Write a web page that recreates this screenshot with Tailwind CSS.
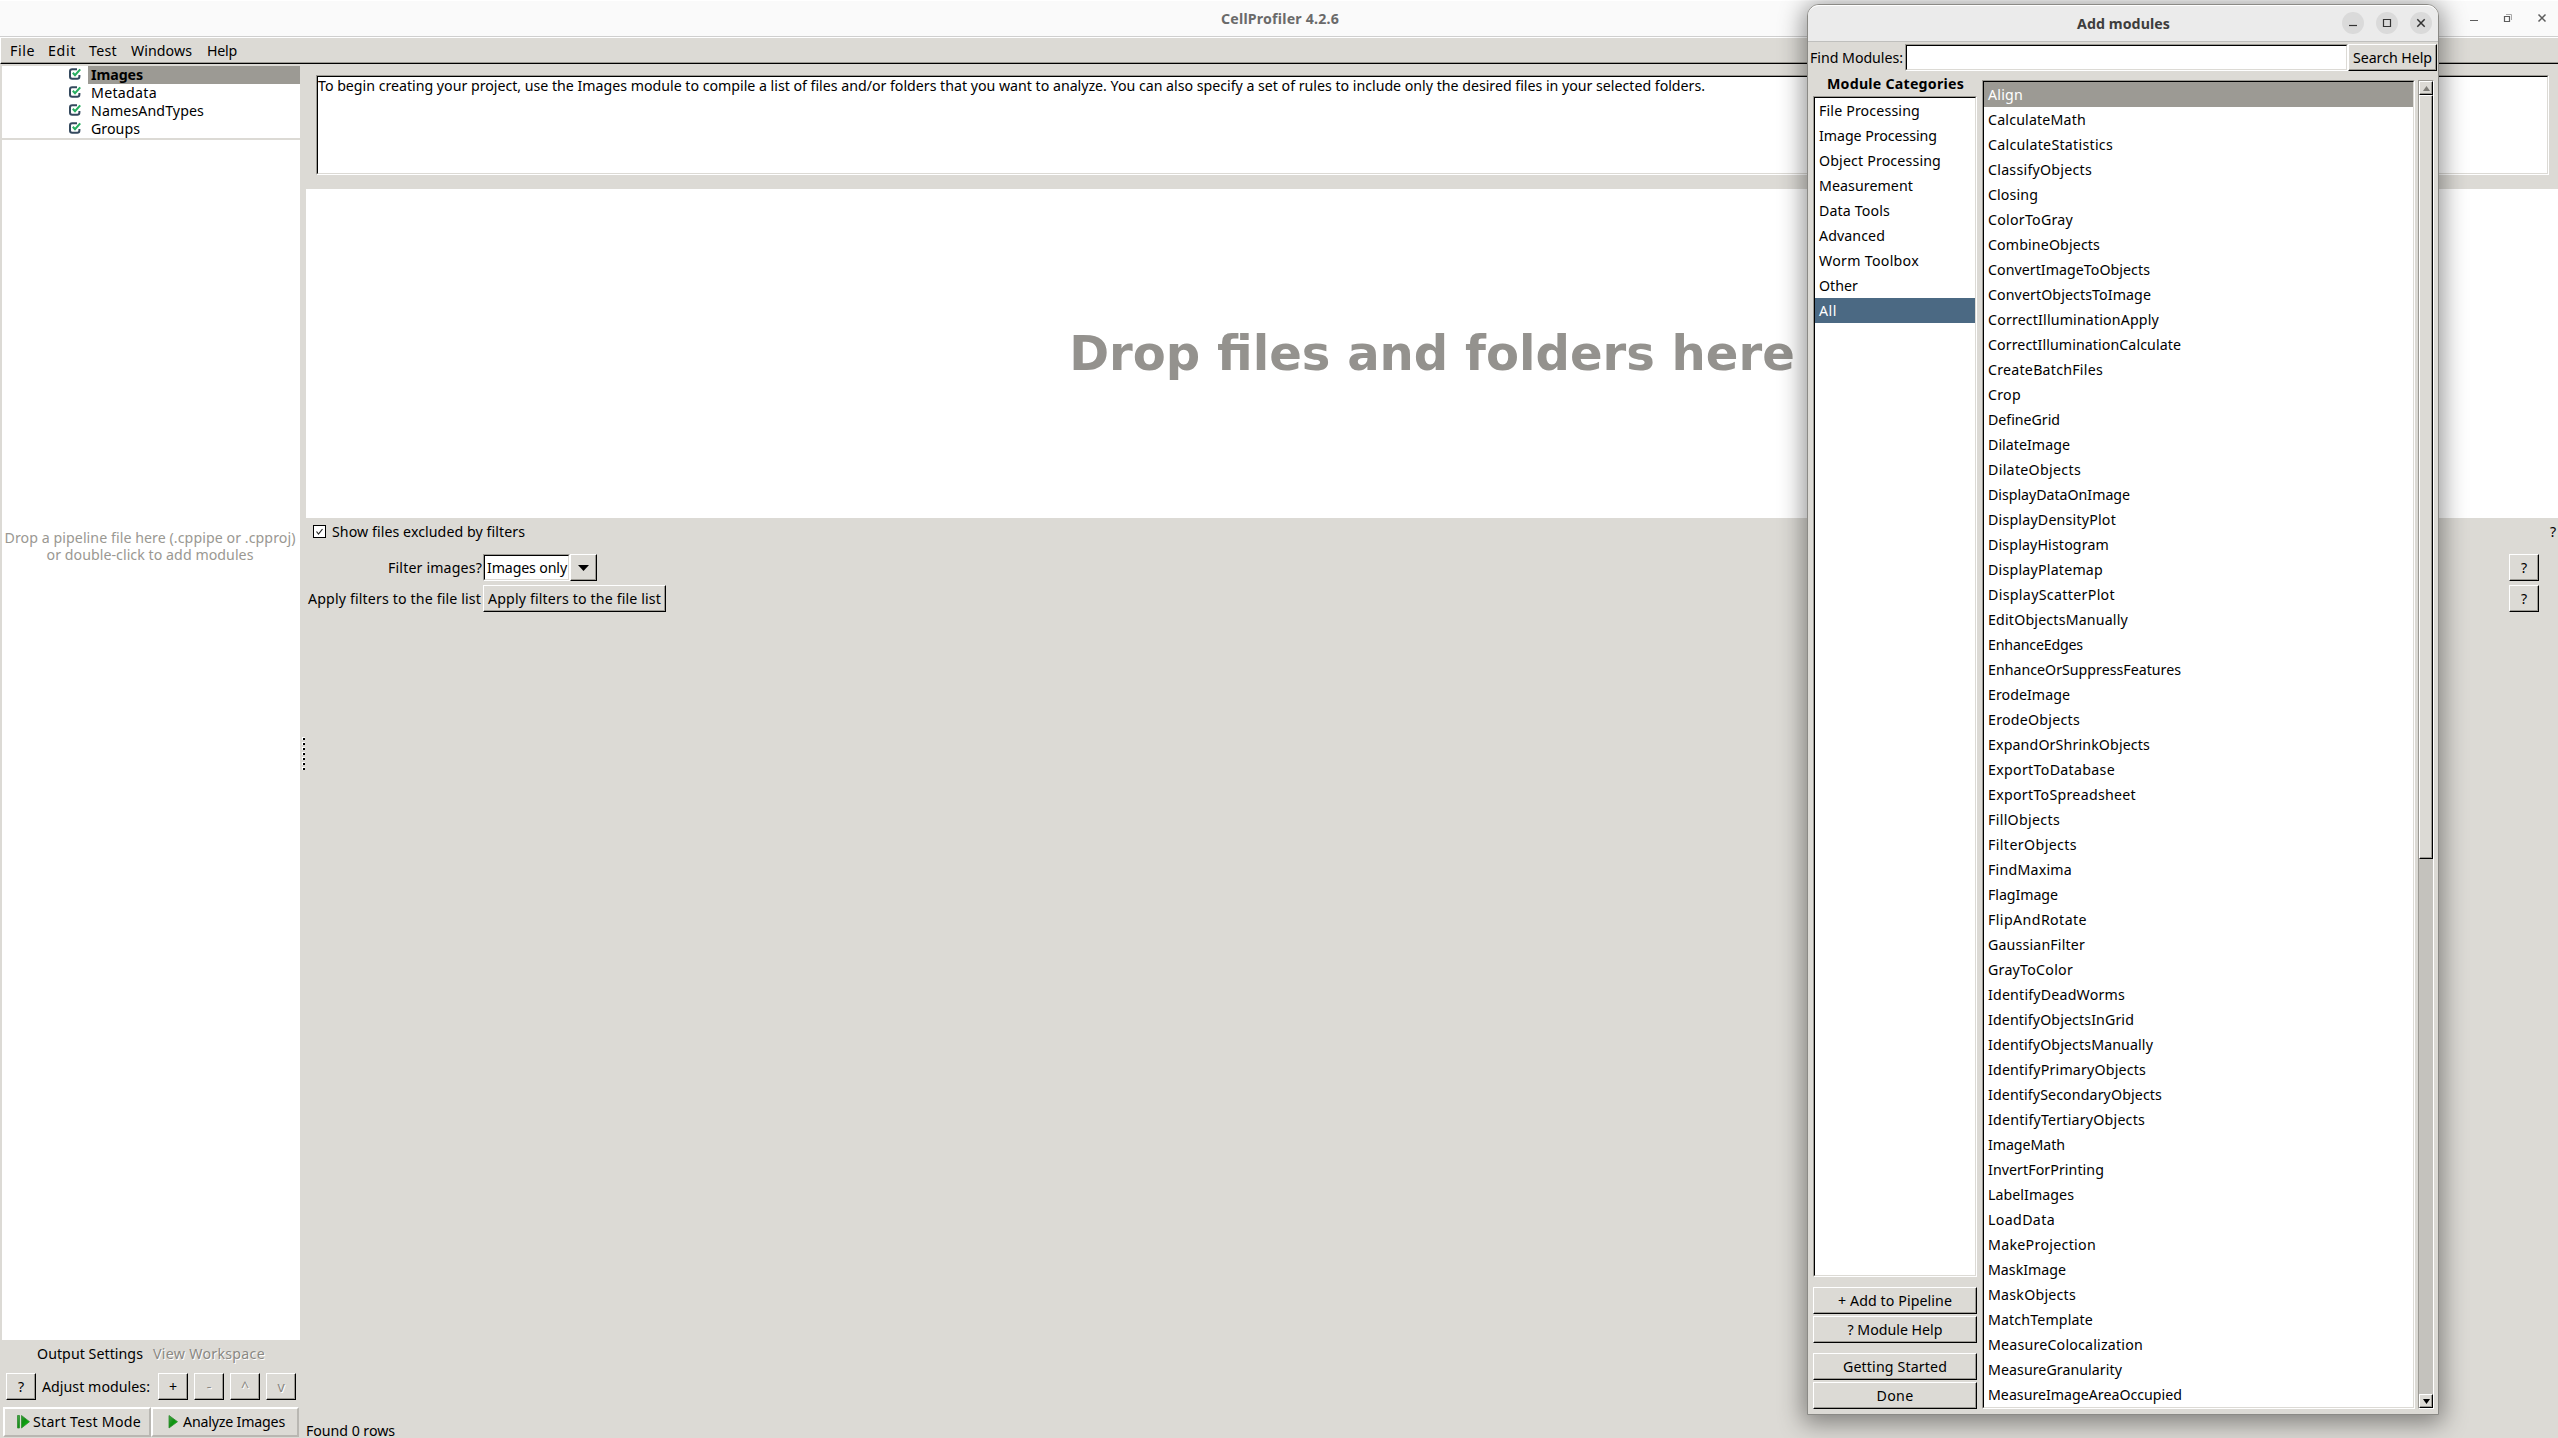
<!DOCTYPE html>
<html lang="en">
<head>
<meta charset="utf-8">
<title>CellProfiler 4.2.6</title>
<script src="https://cdn.jsdelivr.net/npm/@tailwindcss/browser@4"></script>
</head>
<body class="overflow-hidden">
<svg class="absolute size-0">
  <symbol id="check" viewBox="0 0 12 12">
    <path d="M8 1.2H3.2Q1 1.2 1 3.4V8.6Q1 10.8 3.2 10.8H8.2Q10.4 10.8 10.4 8.6V7" fill="none" stroke="#34495e" stroke-width="2"/>
    <path d="M3.8 4.8L6 7.2L11.2 1.4" fill="none" stroke="#27ae60" stroke-width="2.1"/>
  </symbol>
  <linearGradient id="green" x1="0" y1="0" x2="1" y2="1"><stop offset="0" stop-color="#4aa84a"/><stop offset=".5" stop-color="#0f8f12"/><stop offset="1" stop-color="#08d808"/></linearGradient>
</svg>
<div class="relative flex h-[1438px] w-[2558px] flex-col overflow-hidden bg-[#dcdad5] font-['Noto_Sans',sans-serif] text-[14.2px] leading-[18px] whitespace-nowrap text-black" id="screen">

  <!-- Main window title bar -->
  <header class="flex h-[37px] shrink-0 border-t border-b border-t-white border-b-[#cfcfcf] bg-[#fafafa]">
    <div class="w-[1221px]"></div>
    <div class="w-[1249px] pt-[9px] font-bold text-[#6a6a6a]"><span data-w="118">CellProfiler 4.2.6</span></div>
    <svg class="mt-[12px] h-[12px] w-[80px]" viewBox="0 0 80 12" fill="none" stroke="#5c5c5c">
      <path d="M0 7.5H8" stroke-width="1"/>
      <path d="M34.5 3.5H39.5V8.5H34.5Z" stroke-width="1.2"/><path d="M36 1.5H41.5V7" stroke="#a8a8a8"/>
      <path d="M68.5 1.5L75.5 8.5M75.5 1.5L68.5 8.5" stroke-width="1.5"/>
    </svg>
  </header>

  <!-- Menu bar -->
  <nav class="flex h-[27px] shrink-0 border-t border-b border-l border-t-white border-b-black border-l-white shadow-[inset_0_-1px_0_#9c9a94]">
    <div class="flex pt-[4px] pl-[9px]">
      <div class="w-[38px]"><span data-w="25">File</span></div>
      <div class="w-[41px]"><span data-w="28">Edit</span></div>
      <div class="w-[42px]"><span data-w="28">Test</span></div>
      <div class="w-[76px]"><span data-w="61">Windows</span></div>
      <div><span data-w="30">Help</span></div>
    </div>
  </nav>

  <main class="flex h-[1374px] shrink-0">
    <!-- Pipeline column -->
    <aside class="flex w-[300px] shrink-0 flex-col pt-[2px] pl-[2px]">
      <div class="flex h-[72px] flex-col bg-white" id="tree"></div>
      <div class="mt-[2px] flex h-[1200px] flex-col items-center bg-white pt-[389px] pr-[2px] leading-[17px] text-[#9a9892]">
        <span data-w="291">Drop a pipeline file here (.cppipe or .cpproj)</span>
        <span data-w="207">or double-click to add modules</span>
      </div>
      <div class="flex h-[33px] gap-[10px] pt-[5px] pl-[35px]">
        <span data-w="106">Output Settings</span>
        <span data-w="112" class="text-[#8a8883] [text-shadow:1px_1px_0_#fff]">View Workspace</span>
      </div>
      <div class="flex h-[27px] pl-[4px] text-center leading-[27px]">
        <div class="w-[30px] border border-t-white border-r-black border-b-black border-l-white leading-[25px] shadow-[inset_-1px_-1px_0_#9c9a94]">?</div>
        <div class="w-[122px] pl-[6px] text-left"><span data-w="108">Adjust modules:</span></div>
        <div class="flex gap-[6px] text-[#8a8883]">
          <div class="w-[30px] border border-t-white border-r-black border-b-black border-l-white leading-[25px] text-black shadow-[inset_-1px_-1px_0_#9c9a94]">+</div>
          <div class="w-[30px] border border-t-white border-r-black border-b-black border-l-white leading-[25px] shadow-[inset_-1px_-1px_0_#9c9a94] [text-shadow:1px_1px_0_#fff]">-</div>
          <div class="w-[30px] border border-t-white border-r-black border-b-black border-l-white leading-[25px] shadow-[inset_-1px_-1px_0_#9c9a94] [text-shadow:1px_1px_0_#fff]">^</div>
          <div class="w-[30px] border border-t-white border-r-black border-b-black border-l-white leading-[25px] shadow-[inset_-1px_-1px_0_#9c9a94] [text-shadow:1px_1px_0_#fff]">v</div>
        </div>
      </div>
      <div class="mt-[7px] flex h-[30px] pl-px">
        <div class="flex w-[148px] border-2 border-t-white border-r-[#b9b7b2] border-b-[#b9b7b2] border-l-white pl-[12px]">
          <svg class="mt-[6px] h-[14px] w-[16px]" viewBox="0 0 16 14"><path d="M.5 .5H2.5V13H.5Z M4.5 .5L12.5 6.7L4.5 13Z" fill="url(#green)" stroke="#2f8a2f" stroke-width=".8"/></svg>
          <span data-w="108" class="pt-[4px]">Start Test Mode</span>
        </div>
        <div class="flex w-[148px] border-2 border-t-white border-r-[#b9b7b2] border-b-[#b9b7b2] border-l-white pl-[15px]">
          <svg class="mt-[6px] h-[14px] w-[15px]" viewBox="0 0 15 14"><path d="M1 .5L9.5 6.7L1 13Z" fill="url(#green)" stroke="#2f8a2f" stroke-width=".8"/></svg>
          <span data-w="102" class="pt-[4px]">Analyze Images</span>
        </div>
      </div>
    </aside>

    <!-- Splitter handle -->
    <div class="flex w-[6px] shrink-0 flex-col gap-[2px] pt-[673px] pl-[2px]" id="sash"></div>

    <!-- Module settings -->
    <section class="flex w-[2252px] shrink-0 flex-col">
      <div class="mt-[11px] ml-[10px] h-[100px] w-[2233px] shrink-0 border border-t-[#9c9a94] border-r-white border-b-white border-l-[#9c9a94] bg-white">
        <div class="h-[98px] border border-t-black border-r-[#dcdad5] border-b-[#dcdad5] border-l-black"><span data-w="1387">To begin creating your project, use the Images module to compile a list of files and/or folders that you want to analyze. You can also specify a set of rules to include only the desired files in your selected folders.</span></div>
      </div>
      <div class="mt-[14px] flex h-[329px] shrink-0 items-center justify-center bg-white pb-[2px] font-['DejaVu_Sans',sans-serif] text-[48.1px] font-bold text-[#94928e]"><span>Drop files and folders here</span></div>
      <div class="flex h-[36px] shrink-0 pt-[5px] pl-[7px]">
        <div class="mt-[2px] size-[13px] border border-black bg-white"><svg viewBox="0 0 11 11"><path d="M2.5 5.5L4.5 8L8.5 3" fill="none" stroke="#222" stroke-width="1.2"/></svg></div>
        <div class="w-[2224px] pl-[6px]"><span data-w="193">Show files excluded by filters</span></div>
        <span>?</span>
      </div>
      <div class="flex h-[27px] shrink-0 leading-[27px]">
        <div class="w-[177px] pl-[82px]"><span data-w="94">Filter images?</span></div>
        <div class="w-[87px] border border-t-[#9c9a94] border-r-white border-b-white border-l-[#9c9a94] bg-white">
          <div class="h-[25px] border border-t-black border-r-[#dcdad5] border-b-[#dcdad5] border-l-black pl-[2px] leading-[23px]"><span data-w="80">Images only</span></div>
        </div>
        <div class="flex w-[27px] items-center justify-center border border-t-white border-r-black border-b-black border-l-white shadow-[inset_-1px_-1px_0_#9c9a94]"><svg class="h-[6px] w-[11px]" viewBox="0 0 11 6"><path d="M0 0H11L5.5 6Z"/></svg></div>
        <div class="ml-[1912px] w-[30px] border border-t-white border-r-black border-b-black border-l-white text-center leading-[25px] shadow-[inset_-1px_-1px_0_#9c9a94]">?</div>
      </div>
      <div class="mt-[4px] flex h-[27px] shrink-0 leading-[27px]">
        <div class="w-[177px] pl-[2px]"><span data-w="173">Apply filters to the file list</span></div>
        <div class="w-[183px] border border-t-white border-r-black border-b-black border-l-white pl-[4px] leading-[25px] shadow-[inset_-1px_-1px_0_#9c9a94]"><span data-w="173">Apply filters to the file list</span></div>
        <div class="ml-[1843px] w-[30px] border border-t-white border-r-black border-b-black border-l-white text-center leading-[25px] shadow-[inset_-1px_-1px_0_#9c9a94]">?</div>
      </div>
      <div class="mt-[810px] h-[16px] shrink-0"><span data-w="89">Found 0 rows</span></div>
    </section>
  </main>

  <!-- Add modules dialog -->
  <div class="absolute top-[4px] left-[1807px] flex h-[1411px] w-[632px] flex-col rounded-t-[12px] border border-[#8b8a86] bg-[#dcdad5] shadow-[0_4px_24px_4px_rgba(0,0,0,0.42)]">
    <div class="flex h-[37px] shrink-0 rounded-t-[11px] border-t border-b border-t-white border-b-[#bfbfbd] bg-[#ebebeb]">
      <div class="w-[534px] pt-[9px] pl-[269px] font-bold text-[#3d3d3d]"><span data-w="93">Add modules</span></div>
      <svg class="mt-[6px] h-[22px] w-[92px]" viewBox="0 0 92 22" fill="none" stroke="#333">
        <g fill="#dadada" stroke="none"><circle cx="11" cy="11" r="11"/><circle cx="45" cy="11" r="11"/><circle cx="79" cy="11" r="11"/></g>
        <path d="M7 13.5H15" stroke-width="1.2"/><path d="M41.5 7.5H48.5V14.5H41.5Z" stroke-width="1.2"/><path d="M75.3 7.3L82.7 14.7M82.7 7.3L75.3 14.7" stroke-width="1.5"/>
      </svg>
    </div>
    <div class="mt-[2px] flex h-[27px] shrink-0 leading-[27px]">
      <div class="w-[97px] pl-[2px]"><span data-w="93">Find Modules:</span></div>
      <div class="w-[443px] border border-t-[#9c9a94] border-r-white border-b-white border-l-[#9c9a94] bg-white"><div class="h-[25px] border border-t-black border-r-[#dcdad5] border-b-[#dcdad5] border-l-black"></div></div>
      <div class="w-[89px] border border-t-white border-r-black border-b-black border-l-white pl-[4px] leading-[25px] shadow-[inset_-1px_-1px_0_#9c9a94]"><span data-w="79">Search Help</span></div>
    </div>
    <div class="flex pl-[4px]">
      <div class="flex w-[170px] flex-col pl-px">
        <div class="h-[25px] pt-[4px] pl-[14px] font-bold"><span data-w="137">Module Categories</span></div>
        <div class="h-[1181px] w-[164px] border border-t-[#9c9a94] border-r-white border-b-white border-l-[#9c9a94] bg-white">
          <div class="h-[1179px] border border-t-black border-r-[#dcdad5] border-b-[#dcdad5] border-l-black leading-[25px]" id="categories"></div>
        </div>
        <div class="mt-[10px] flex w-[164px] flex-col text-center leading-[25px]">
          <div class="h-[27px] border border-t-white border-r-black border-b-black border-l-white shadow-[inset_-1px_-1px_0_#9c9a94]"><span data-w="114">+ Add to Pipeline</span></div>
          <div class="mt-[2px] h-[27px] border border-t-white border-r-black border-b-black border-l-white shadow-[inset_-1px_-1px_0_#9c9a94]"><span data-w="95">? Module Help</span></div>
          <div class="mt-[10px] h-[27px] border border-t-white border-r-black border-b-black border-l-white shadow-[inset_-1px_-1px_0_#9c9a94]"><span data-w="104">Getting Started</span></div>
          <div class="mt-[2px] h-[27px] border border-t-white border-r-black border-b-black border-l-white shadow-[inset_-1px_-1px_0_#9c9a94]"><span data-w="37">Done</span></div>
        </div>
      </div>
      <div class="mt-[9px] h-[1329px] w-[433px] border border-t-[#9c9a94] border-r-white border-b-white border-l-[#9c9a94] bg-white">
        <div class="h-[1327px] border border-t-black border-r-[#dcdad5] border-b-[#dcdad5] border-l-black leading-[25px]" id="modules"></div>
      </div>
      <div class="mt-[9px] ml-[3px] flex h-[1329px] w-[16px] flex-col border border-t-[#9c9a94] border-r-white border-b-white border-l-[#9c9a94] bg-[#c4c2bd]">
        <div class="flex h-[14px] shrink-0 items-center justify-center border border-t-white border-r-black border-b-black border-l-white bg-[#dcdad5] shadow-[inset_-1px_-1px_0_#9c9a94]"><svg class="h-[5px] w-[7px]" viewBox="0 0 7 5"><path d="M0 5H7L3.5 0Z" fill="#7f7d78"/></svg></div>
        <div class="h-[764px] shrink-0 border border-t-white border-r-black border-b-black border-l-white bg-[#dcdad5] shadow-[inset_-1px_-1px_0_#9c9a94]"></div>
        <div class="mt-auto flex h-[14px] shrink-0 items-center justify-center border border-t-white border-r-black border-b-black border-l-white bg-[#dcdad5] shadow-[inset_-1px_-1px_0_#9c9a94]"><svg class="h-[5px] w-[7px]" viewBox="0 0 7 5"><path d="M0 0H7L3.5 5Z"/></svg></div>
      </div>
    </div>
  </div>
</div>
<script>
const $ = id => document.getElementById(id);
// Each entry: label, text width in px
$('tree').innerHTML = [['Images',52],['Metadata',66],['NamesAndTypes',113],['Groups',49]].map(([t,w],i) =>
  `<div class="flex h-[18px] pl-[67px]"><svg class="mt-[2px] size-[12px]"><use href="#check"/></svg><div class="${i ? 'ml-[7px] w-[212px] pl-[3px]' : 'ml-[7px] w-[212px] bg-[#9c9a94] pl-[3px] font-bold'}"><span data-w="${w}">${t}</span></div></div>`).join('');
$('sash').innerHTML = '<div class="size-[3px] bg-white pt-px pl-px"><div class="size-[2px] bg-black"></div></div>'.repeat(7);
$('categories').innerHTML = [['File Processing',101],['Image Processing',118],['Object Processing',122],['Measurement',94],['Data Tools',71],['Advanced',66],['Worm Toolbox',100],['Other',39],['All',18]].map(([t,w],i) =>
  `<div class="${i == 8 ? 'h-[25px] bg-[#4b6983] pl-[4px] text-white' : 'h-[25px] pl-[4px]'}"><span data-w="${w}">${t}</span></div>`).join('');
$('modules').innerHTML = [['Align',35],['CalculateMath',98],['CalculateStatistics',125],['ClassifyObjects',104],['Closing',50],['ColorToGray',85],['CombineObjects',112],['ConvertImageToObjects',162],['ConvertObjectsToImage',163],['CorrectIlluminationApply',171],['CorrectIlluminationCalculate',193],['CreateBatchFiles',115],['Crop',33],['DefineGrid',72],['DilateImage',82],['DilateObjects',93],['DisplayDataOnImage',142],['DisplayDensityPlot',128],['DisplayHistogram',121],['DisplayPlatemap',115],['DisplayScatterPlot',127],['EditObjectsManually',140],['EnhanceEdges',95],['EnhanceOrSuppressFeatures',193],['ErodeImage',82],['ErodeObjects',92],['ExpandOrShrinkObjects',162],['ExportToDatabase',127],['ExportToSpreadsheet',148],['FillObjects',72],['FilterObjects',89],['FindMaxima',84],['FlagImage',70],['FlipAndRotate',99],['GaussianFilter',97],['GrayToColor',85],['IdentifyDeadWorms',137],['IdentifyObjectsInGrid',146],['IdentifyObjectsManually',165],['IdentifyPrimaryObjects',158],['IdentifySecondaryObjects',174],['IdentifyTertiaryObjects',157],['ImageMath',77],['InvertForPrinting',116],['LabelImages',86],['LoadData',67],['MakeProjection',108],['MaskImage',78],['MaskObjects',88],['MatchTemplate',105],['MeasureColocalization',155],['MeasureGranularity',134],['MeasureImageAreaOccupied',194]].map(([t,w],i) =>
  `<div class="${i ? 'h-[25px] pl-[4px]' : 'h-[25px] bg-[#9c9a94] pl-[4px] text-white'}"><span data-w="${w}">${t}</span></div>`).join('');
// Track each label so that it takes its given width
function fit() {
  document.querySelectorAll('[data-w]').forEach(e => {
    e.style.letterSpacing = '0px';
    const r = document.createRange(); r.selectNodeContents(e);
    e.style.letterSpacing = (e.dataset.w - r.getBoundingClientRect().width) / e.textContent.length + 'px';
  });
}
fit();
new ResizeObserver(fit).observe($('screen'));
addEventListener('load', () => { fit(); requestAnimationFrame(fit); setTimeout(fit, 50); });
document.fonts.ready.then(fit);
</script>
</body>
</html>
